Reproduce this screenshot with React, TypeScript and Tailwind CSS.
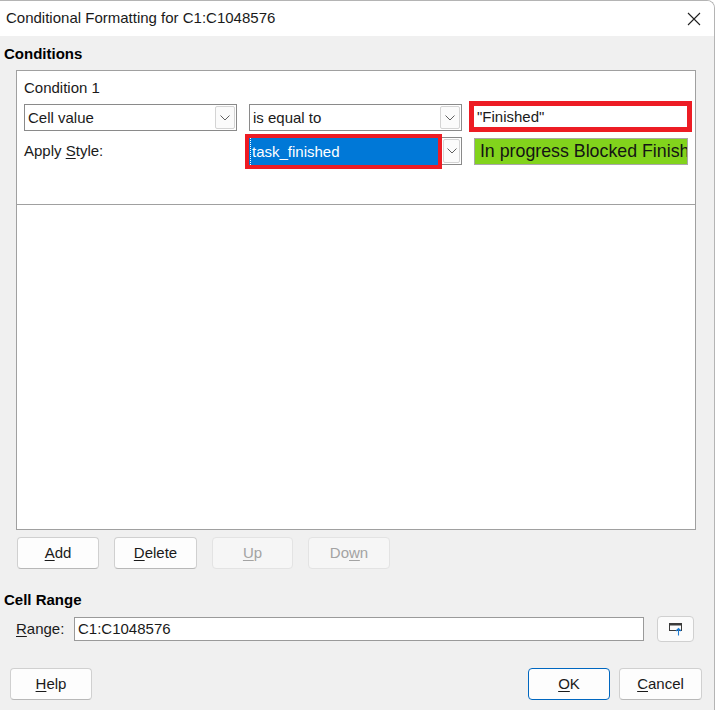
import type { ReactNode } from 'react';

function Chevron() {
  return (
    <svg width="10" height="6" viewBox="0 0 10 6" fill="none">
      <path d="M0.5 0.5 L5 5 L9.5 0.5" stroke="#606060" strokeWidth="1" />
    </svg>
  );
}

function DropButton({ className = '' }: { className?: string }) {
  return (
    <div className={`w-[20px] h-full flex items-center justify-center bg-[#fbfbfb] border border-[#d4d4d4] rounded-[2px] ${className}`}>
      <Chevron />
    </div>
  );
}

function Select({ value, className = '' }: { value: string; className?: string }) {
  return (
    <div className={`w-[213px] h-[27px] flex items-stretch bg-white border border-[#8a8a8a] p-[1px] ${className}`}>
      <span className="flex-1 pl-[2px] leading-[23px] text-[#1a1a1a]">{value}</span>
      <DropButton />
    </div>
  );
}

function Btn({ children, disabled, primary, className = '' }: { children: ReactNode; disabled?: boolean; primary?: boolean; className?: string }) {
  const look = disabled
    ? 'bg-[#f6f6f6] border-[#e3e3e3] text-[#a3a3a3]'
    : primary
      ? 'bg-[#fdfdfd] border-[#0067c0] text-[#1a1a1a]'
      : 'bg-[#fdfdfd] border-[#d0d0d0] border-b-[#b8b8b8] text-[#1a1a1a]';
  return (
    <div className={`h-[32px] flex items-center justify-center border rounded-[4px] ${look} ${className}`}>
      {children}
    </div>
  );
}

export default function App() {
  return (
    <div className="w-[718px] h-[710px] bg-white overflow-hidden font-['Liberation_Sans',Arial,sans-serif] text-[15px] text-black">
      <div className="w-[715px] h-[710px] flex flex-col border-r border-t border-[#b4b4b4] rounded-tr-[8px] overflow-hidden">
        {/* title bar */}
        <div className="h-[35px] shrink-0 bg-white flex items-center justify-between pl-[6px] pr-[13px]">
          <span className="text-[#1a1a1a]">Conditional Formatting for C1:C1048576</span>
          <svg width="14" height="14" viewBox="0 0 14 14">
            <path d="M1 1 L13 13 M13 1 L1 13" stroke="#202020" strokeWidth="1.1" />
          </svg>
        </div>

        {/* body */}
        <div className="flex-1 bg-[#f0f0f0] flex flex-col">
          <div className="pl-[4px] pt-[8px] leading-[20px] font-bold">Conditions</div>

          <div className="ml-[16px] mt-[6px] w-[680px] h-[460px] bg-white border border-[#a0a0a0] flex flex-col">
            <div className="h-[134px] border-b border-[#a0a0a0] pl-[7px] pt-[7px]">
              <div className="leading-[20px] text-[#1a1a1a]">Condition 1</div>

              <div className="mt-[3px] flex items-start h-[31px]">
                <Select value="Cell value" className="mt-[3px]" />
                <Select value="is equal to" className="mt-[3px] ml-[12px]" />
                <div className="ml-[7px] w-[223px] h-[31px] border-[5px] border-[#ed1c24] bg-white pl-[3px] leading-[21px] text-[#1a1a1a]">
                  "Finished"
                </div>
              </div>

              <div className="mt-[2px] flex items-start h-[35px]">
                <div className="w-[221px] self-center text-[#1a1a1a]">
                  Apply <u className="underline-offset-2">S</u>tyle:
                </div>
                <div className="w-[197px] h-[35px] border-[4px] border-[#ed1c24] bg-[#0078d7] flex">
                  <div className="ml-[1px] h-full border-l border-dotted border-white pl-[1px] leading-[27px] text-white">task_finished</div>
                </div>
                <div className="mt-[3px] h-[28px] w-[20px] bg-white border border-[#8a8a8a] border-l-0 p-[1px]">
                  <DropButton className="w-full" />
                </div>
                <div className="ml-[12px] mt-[4px] w-[214px] h-[27px] bg-[#82d31c] border border-[#a8a8a8] overflow-hidden flex items-center">
                  <span className="whitespace-nowrap ml-[-87px] text-[17.8px] text-[#141414]">Not started In progress Blocked Finished</span>
                </div>
              </div>
            </div>
          </div>

          <div className="mt-[7px] ml-[17px] flex gap-[15px]">
            <Btn className="w-[82px]"><u className="underline-offset-2">A</u>dd</Btn>
            <Btn className="w-[83px]"><u className="underline-offset-2">D</u>elete</Btn>
            <Btn disabled className="w-[81px]"><u className="underline-offset-2">U</u>p</Btn>
            <Btn disabled className="w-[82px]">Do<u className="underline-offset-2">w</u>n</Btn>
          </div>

          <div className="pl-[4px] mt-[21px] leading-[20px] font-bold">Cell Range</div>

          <div className="mt-[6px] flex items-center h-[26px]">
            <div className="w-[74px] pl-[16px] text-[#1a1a1a]">
              <u className="underline-offset-2">R</u>ange:
            </div>
            <div className="w-[570px] h-[24px] bg-white border border-[#9a9a9a] pl-[3px] leading-[22px] text-[#1a1a1a]">C1:C1048576</div>
            <div className="ml-[13px] w-[37px] h-[26px] bg-[#fbfbfb] border border-[#d0d0d0] rounded-[4px] flex items-center justify-center">
              <svg width="16" height="14" viewBox="0 0 16 14" fill="none">
                <rect x="1.5" y="1.5" width="12" height="7" stroke="#3a3a3a" strokeWidth="1" />
                <rect x="1" y="1" width="13" height="2.5" fill="#3a3a3a" />
                <path d="M10.5 13.5 V6.5 M8 9 L10.5 6.5 L13 9" stroke="#1c7bd4" strokeWidth="1.1" />
              </svg>
            </div>
          </div>

          <div className="mt-[26px] pl-[10px] pr-[12px] flex items-center">
            <Btn className="w-[82px] h-[31px]"><u className="underline-offset-2">H</u>elp</Btn>
            <div className="flex-1" />
            <Btn primary className="w-[82px] h-[32px]"><u className="underline-offset-2">O</u>K</Btn>
            <Btn className="w-[83px] h-[32px] ml-[9px]"><u className="underline-offset-2">C</u>ancel</Btn>
          </div>
        </div>
      </div>
    </div>
  );
}
